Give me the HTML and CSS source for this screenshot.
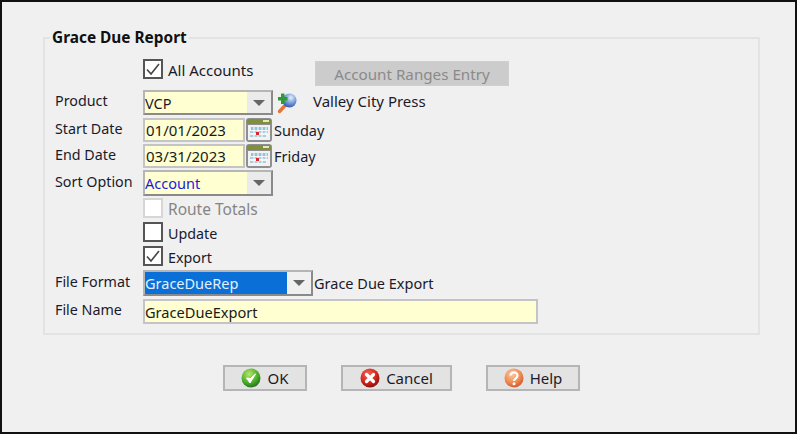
FILE: index.html
```html
<!DOCTYPE html>
<html lang="en">
<head>
    <meta charset="UTF-8">
    <meta name="viewport" content="width=device-width, initial-scale=1.0">
    <title>Grace Due Report</title>
    <link rel="stylesheet" href="styles.css">
</head>
<body>
    <svg class="defs" width="0" height="0">
        <defs>
            <radialGradient id="gradOk" cx="40%" cy="30%" r="75%">
                <stop offset="0" stop-color="#b6e86a"/>
                <stop offset="0.6" stop-color="#4fae2c"/>
                <stop offset="1" stop-color="#1c6d18"/>
            </radialGradient>
            <radialGradient id="gradCancel" cx="40%" cy="30%" r="75%">
                <stop offset="0" stop-color="#f0685a"/>
                <stop offset="0.6" stop-color="#d3261c"/>
                <stop offset="1" stop-color="#7d0d0a"/>
            </radialGradient>
            <radialGradient id="gradHelp" cx="40%" cy="30%" r="75%">
                <stop offset="0" stop-color="#fbc9a4"/>
                <stop offset="0.6" stop-color="#f08a50"/>
                <stop offset="1" stop-color="#c9552a"/>
            </radialGradient>
            <radialGradient id="gradGlobe" cx="60%" cy="30%" r="75%">
                <stop offset="0" stop-color="#e8f0fa"/>
                <stop offset="0.5" stop-color="#7c9fdc"/>
                <stop offset="1" stop-color="#2a4fa8"/>
            </radialGradient>
            <symbol id="calendar" viewBox="0 0 28 26">
                <rect x="1" y="1" width="26" height="24" rx="3" fill="#8f8f8f"/>
                <path d="M2 7V4a2 2 0 0 1 2-2h20a2 2 0 0 1 2 2v3z" fill="#7f8f3a"/>
                <rect x="18" y="3" width="6" height="2" fill="#e6e6c8"/>
                <rect x="3" y="8" width="22" height="15" fill="#f2f2f2"/>
                <rect x="6" y="10" width="17" height="3" fill="#8fc4dc"/>
                <path d="M5 14h18v2H5zM5 18h16v2H5z" fill="#a9cfe0"/>
                <path d="M9 10v10M13 10v10M17 10v10M21 10v8" stroke="#fff" stroke-width="1"/>
                <rect x="11" y="15" width="3" height="3" fill="#d8262a"/>
            </symbol>
        </defs>
    </svg>

    <div class="window">
        <fieldset class="group">
            <legend>Grace Due Report</legend>

            <div class="row row-first">
                <span class="label"></span>
                <label class="check">
                    <span class="box checked">
                        <svg viewBox="0 0 20 20" width="20" height="20"><path d="M4 10.500l4 4.500 8-10" fill="none" stroke="#444" stroke-width="1.6"/></svg>
                    </span>
                    <span class="check-text wide">All Accounts</span>
                </label>
                <button class="ranges" disabled>Account Ranges Entry</button>
            </div>

            <div class="row row-product">
                <span class="label">Product</span>
                <div class="combo combo-product">
                    <span class="combo-value">VCP</span>
                    <span class="combo-arrow"></span>
                </div>
                <svg class="lookup" viewBox="0 0 22 22" width="22" height="22">
                    <path d="M9.500 13l-6 6.500" stroke="#e0763a" stroke-width="3.400" stroke-linecap="round"/>
                    <circle cx="13.500" cy="8.500" r="7" fill="url(#gradGlobe)"/>
                    <path d="M5 1.500h3.500v3.500h3v3.500h-3V12H5V8.500H2V5h3z" fill="#2e9c33"/>
                </svg>
                <span class="desc desc-product">Valley City Press</span>
            </div>

            <div class="row row-date">
                <span class="label">Start Date</span>
                <input class="date" type="text" value="01/01/2023">
                <svg class="cal" width="28" height="26"><use href="#calendar"/></svg>
                <span class="desc desc-date">Sunday</span>
            </div>

            <div class="row row-date">
                <span class="label">End Date</span>
                <input class="date" type="text" value="03/31/2023">
                <svg class="cal" width="28" height="26"><use href="#calendar"/></svg>
                <span class="desc desc-date">Friday</span>
            </div>

            <div class="row row-sort">
                <span class="label">Sort Option</span>
                <div class="combo combo-sort">
                    <span class="combo-value blue">Account</span>
                    <span class="combo-arrow"></span>
                </div>
            </div>

            <div class="row row-check">
                <span class="label"></span>
                <label class="check disabled"><span class="box"></span><span class="check-text route">Route Totals</span></label>
            </div>

            <div class="row row-check">
                <span class="label"></span>
                <label class="check"><span class="box"></span><span class="check-text">Update</span></label>
            </div>

            <div class="row row-check">
                <span class="label"></span>
                <label class="check">
                    <span class="box checked">
                        <svg viewBox="0 0 20 20" width="20" height="20"><path d="M4 10.500l4 4.500 8-10" fill="none" stroke="#444" stroke-width="1.6"/></svg>
                    </span>
                    <span class="check-text">Export</span>
                </label>
            </div>

            <div class="row row-format">
                <span class="label">File Format</span>
                <div class="combo combo-format">
                    <span class="combo-value selected">GraceDueRep</span>
                    <span class="combo-arrow"></span>
                </div>
                <span class="desc desc-format">Grace Due Export</span>
            </div>

            <div class="row row-name">
                <span class="label">File Name</span>
                <input class="filename" type="text" value="GraceDueExport">
            </div>
        </fieldset>

        <div class="actions">
            <button class="action btn-ok">
                <svg viewBox="0 0 20 20" width="20" height="20">
                    <circle cx="10" cy="10" r="9.500" fill="url(#gradOk)"/>
                    <path d="M5.500 10l3.500 5 5.500-9-5 4.500z" fill="#fff" stroke="#fff" stroke-width="1"/>
                </svg>
                OK
            </button>
            <button class="action btn-cancel">
                <svg viewBox="0 0 20 20" width="20" height="20">
                    <circle cx="10" cy="10" r="9.500" fill="url(#gradCancel)"/>
                    <path d="M6.500 6.500l7 7M13.500 6.500l-7 7" stroke="#fff" stroke-width="3.200" stroke-linecap="round"/>
                </svg>
                Cancel
            </button>
            <button class="action btn-help">
                <svg viewBox="0 0 20 20" width="20" height="20">
                    <circle cx="10" cy="10" r="9.500" fill="url(#gradHelp)"/>
                    <path d="M6.500 7.500a3.500 3.200 0 1 1 5.500 2.700c-1.300.9-2 1.300-2 2.800" fill="none" stroke="#fff" stroke-width="2.200"/>
                    <circle cx="10" cy="15.800" r="1.500" fill="#fff"/>
                </svg>
                Help
            </button>
        </div>
    </div>
</body>
</html>
```

FILE: styles.css
```css
* {
    box-sizing: border-box;
}

body {
    margin: 0;
    font-family: "Noto Sans", "Liberation Sans", sans-serif;
    font-size: 14.3px;
    color: #1a1a2a;
}

.defs {
    display: block;
    height: 0;
}

.window {
    width: 797px;
    height: 434px;
    border: 2px solid #111;
    background-color: #f0f0f0;
    padding: 27px 35px 0 41px;
    overflow: hidden;
}

.group {
    margin: 0;
    padding: 0 0 9px 10px;
    height: 306px;
    border: 2px solid #e3e3e3;
}

.group legend {
    margin-left: -5px;
    padding: 0 2px;
    font-size: 15.4px;
    font-weight: bold;
    line-height: 18px;
    color: #111;
}

/* rows */
.row {
    display: flex;
    align-items: center;
}

.label {
    width: 88px;
    flex: none;
    position: relative;
    top: -2px;
}

.row-first {
    height: 27px;
    margin-top: 12px;
    margin-bottom: 4px;
    align-items: flex-start;
}

.row-product {
    height: 25px;
    margin-bottom: 3px;
}

.row-date {
    height: 24px;
    margin-bottom: 2px;
}

.row-sort {
    height: 26px;
    margin-top: 1px;
    margin-bottom: 2px;
}

.row-check {
    height: 20px;
    margin-bottom: 4px;
}

.row-format {
    height: 26px;
    margin-bottom: 3px;
}

.row-name {
    height: 25px;
}

/* checkboxes */
.check {
    display: flex;
    align-items: center;
    gap: 5px;
    height: 20px;
}

.check-text {
    margin-top: 2px;
}

.check-text.wide {
    font-size: 15px;
}

.check-text.route {
    font-size: 15.500px;
}

.row-first .check {
    width: 172px;
    flex: none;
}

.box {
    width: 20px;
    height: 20px;
    border: 2px solid #555;
    background-color: #fff;
    display: block;
    flex: none;
}

.box svg {
    display: block;
    margin: -2px;
}

.check.disabled {
    color: #858585;
}

.check.disabled .box {
    border-color: #d6d6d6;
}

.ranges {
    margin-top: 2px;
    width: 194px;
    height: 25px;
    border: 1px solid #cfcfcf;
    background-color: #cccccc;
    color: #8a8a8a;
    font-family: inherit;
    font-size: 15.200px;
    padding: 0;
}

/* combos */
.combo {
    display: flex;
    height: 100%;
    border: 2px solid #b5b5b5;
    border-right-color: #8a8a8a;
    border-bottom-color: #8a8a8a;
}

.combo-value {
    flex: 1;
    background-color: #ffffd2;
    padding-left: 0;
    display: flex;
    align-items: center;
    font-size: 14.500px;
}

.combo-value.blue {
    color: #1a1ae0;
}

.combo-value.selected {
    background-color: #0a6fd6;
    color: #e4f0fb;
}

.combo-arrow {
    width: 24px;
    flex: none;
    background-color: #ebebeb;
    display: flex;
    align-items: center;
    justify-content: center;
}

.combo-arrow::after {
    content: "";
    border-left: 6px solid transparent;
    border-right: 6px solid transparent;
    border-top: 6px solid #666;
}

.combo-product,
.combo-sort {
    width: 130px;
}

.combo-format {
    width: 170px;
}

.combo-format .combo-arrow {
    background-color: #f0f0f0;
}

.lookup {
    margin-left: 3px;
    flex: none;
}

.desc {
    white-space: nowrap;
    font-size: 14.500px;
}

.desc-product {
    margin-left: 15px;
    font-size: 15px;
    margin-bottom: 4px;
}

.desc-date {
    margin-left: 1px;
}

.desc-format {
    margin-left: 1px;
}

/* inputs */
.date,
.filename {
    height: 100%;
    border: 2px solid #c4c4c4;
    background-color: #ffffd2;
    font-family: inherit;
    color: #1a1a1a;
    outline: none;
}

.date {
    width: 102px;
    padding: 0 0 0 1px;
    font-size: 15px;
}

.filename {
    width: 395px;
    padding: 0 0 0 0;
    font-size: 14.600px;
}

.cal {
    flex: none;
    margin-top: -1px;
}

/* bottom buttons */
.actions {
    display: flex;
    gap: 34px;
    margin-top: 30px;
    margin-left: 180px;
}

.action {
    height: 26px;
    display: flex;
    align-items: center;
    justify-content: center;
    gap: 6px;
    padding: 0;
    border: 2px solid #b5b5b5;
    background-color: #e3e3e3;
    font-family: inherit;
    font-size: 15px;
    color: #1a1a2a;
}

.btn-ok {
    width: 84px;
}

.btn-cancel {
    width: 111px;
}

.btn-help {
    width: 94px;
}
```
